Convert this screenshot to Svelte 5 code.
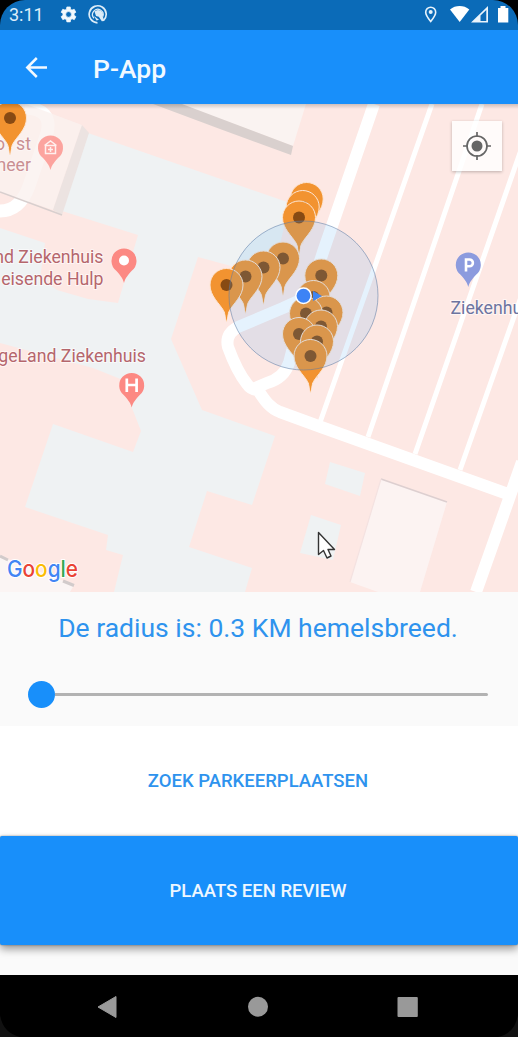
<script>
  const markers = [
    [10, 118], [306.7, 199], [302.7, 207], [299, 217.5],
    [283, 258.5], [263.5, 267.5], [245.5, 276.5], [226.5, 285],
    [321.3, 275.5], [313.5, 297], [326.5, 312.5], [306, 313.5],
    [321, 326.5], [299, 334], [317, 341.5], [310.5, 356]
  ];
</script>

<div class="phone">
  <header>
    <div class="status">
      <span class="clock">3:11</span>
      <svg class="left-icons" width="50" height="22" viewBox="58 4 50 22">
        <path fill="#f3f9fd" stroke="#f3f9fd" stroke-width=".8" fill-rule="evenodd" transform="translate(57.400 4.100) scale(.86)" d="M19.4 13c.1-.7.1-1.3 0-2l2.1-1.6-2-3.5-2.5 1a7 7 0 0 0-1.7-1L15 3.300h-4l-.5 2.600a7 7 0 0 0-1.700 1l-2.500-1-2 3.500L6.500 11a8 8 0 0 0 0 2l-2.200 1.600 2 3.500 2.500-1a7 7 0 0 0 1.700 1l.5 2.600h4l.4-2.600a7 7 0 0 0 1.700-1l2.500 1 2-3.500zM13 15.300a3.300 3.300 0 1 1 0-6.600 3.300 3.300 0 0 1 0 6.600z" />
        <path d="M103.500 20.500A8.500 8.500 0 1 0 97.500 22.800" fill="none" stroke="#dcecf8" stroke-width="1.700" />
        <path d="M94 18.300A5.300 5.300 0 1 1 102.800 16.500" fill="none" stroke="#dcecf8" stroke-width="1.300" />
        <path d="M94.500 11.500a5 5 0 0 1 8.300 5l1.500 4.500-2.500.3-3-4.500-2.800-.8zM94 16l5 3.700-2.500.9z" fill="#dcecf8" />
      </svg>
      <svg class="right-icons" width="90" height="22" viewBox="422 4 90 22">
        <path d="M430.700 21.500c-3-3.700-5-6.400-5-9.300a5 5 0 0 1 10 0c0 2.900-2 5.600-5 9.300z" fill="none" stroke="#e6f2fb" stroke-width="1.600" />
        <circle cx="430.700" cy="12" r="2" fill="#e6f2fb" />
        <path d="M450 9.500c5.500-4.600 13.800-4.600 19.300 0L459.700 22z" fill="#fff" />
        <path d="M471 22.500 488 6v16.500zM480.500 15.500v5.400h5.800v-10.800z" fill="#eaf4fc" fill-rule="evenodd" />
        <path d="M498 8h2.500V6h5v2h2.800v14.600H498z" fill="#fff" />
      </svg>
    </div>
    <div class="appbar">
      <svg width="24" height="24" viewBox="0 0 24 24"><path d="M23 12.500H3.500M12.800 3 3.300 12.500l9.500 9.500" fill="none" stroke="#f2f9ff" stroke-width="2.500" /></svg>
      <h1>P-App</h1>
    </div>
  </header>

  <main>
    <svg class="map" width="518" height="488" viewBox="0 104 518 488">
      <defs>
        <path id="pin" d="M0 37C-.8 34-.9 29-3 25.500C-7 18.500-16.500 11-16.500 0A16.500 16.500 0 0 1 16.500 0C16.500 11 7 18.500 3 25.500C.9 29 .8 34 0 37z" />
        <path id="poi" d="M0 22.500C-1.500 17-4 14.500-8 10A12.500 12.500 0 1 1 8 10C4 14.500 1.500 17 0 22.500z" />
        <linearGradient id="shade" x1="0" y1="0" x2="0" y2="1">
          <stop offset="0" stop-color="#000" stop-opacity=".18" /><stop offset="1" stop-color="#000" stop-opacity="0" />
        </linearGradient>
      </defs>
      <rect y="104" width="518" height="488" fill="#fde8e4" />
      <path fill="#eff2f3" d="M88 133 290 203 272 277 198 257 171 339 202 410 275 436 252 505 207 491 189 547 252 568 245 592H114L123 555 106 550 108 535 25 507 53 424 133 452 141 431 132 408 123 380 93 368 0 343V228L45 243 40 278 57 290 88 299 118 303 138 235 62 211z" />
      <path fill="#eff2f3" d="M330 462 365 473 360 496 325 484zM311 515 341 525 333 560 300 553z" />
      <path d="M25 108Q53 109 47 133L29 186Q20 211 0 211" fill="none" stroke="#fff" stroke-width="13" />
      <path d="M0 104H26L82 125 53 210 0 192z" fill="#faf1ef" opacity=".8" />
      <path d="M82 125 89 133 62 215 53 210z" fill="#ece3e1" />
      <path d="M0 192 62 215" stroke="#d8cfce" stroke-width="1.500" />
      <path d="M180 104H306L293 146z" fill="#faf3f1" />
      <path d="M153 104H182L293 146 291 155 220 129z" fill="#d9d0ce" />
      <path d="M381 479 447 502 420 592H378L350 582z" fill="#fcf3f2" />
      <path d="M381 479 447 502" stroke="#ddcfd0" stroke-width="1.600" />
      <path d="M381 479 350 582" stroke="#f4e2e1" stroke-width="1.200" />
      <path d="M0 556 74 585 70 592H0z" fill="#fbf5f4" />
      <path d="M0 556 8 560M63 581 74 585.500" stroke="#d2cbcb" stroke-width="3" />
      <g fill="none" stroke="#fff">
        <path stroke-width="5" d="M432 104 320.500 421M482 104 368 437M537 104 415 454M551 212 460 470" />
        <path stroke-width="12" stroke-linejoin="round" d="M374 104 323 252 297 332 289 363Q284 378 267 383L253 389M305 298 283 308 238 327Q225 334 228 347C232 358 239 374 247 384Q251 390 258 390C265 401 270 408 280 412L321 427 505 493M476 592 522 462" />
      </g>

      <g class="label warm">
        <text x="5" y="150" text-anchor="end" opacity=".7">o</text>
        <text x="31" y="150" text-anchor="end" opacity=".7">st</text>
        <text x="31" y="171" text-anchor="end" opacity=".7">neer</text>
        <text x="103.500" y="263" text-anchor="end">nd Ziekenhuis</text>
        <text x="103.500" y="285" text-anchor="end">eisende Hulp</text>
        <text x="146" y="361.500" text-anchor="end">geLand Ziekenhuis</text>
      </g>
      <g class="label cool"><text x="450.500" y="314">Ziekenhuis</text></g>

      <g fill="#fc8983">
        <use href="#poi" x="50.500" y="147.500" opacity=".75" />
        <use href="#poi" x="124" y="260.500" />
        <use href="#poi" x="131.700" y="385" />
      </g>
      <use href="#poi" x="468.300" y="264.500" fill="#8c9bde" />
      <circle cx="124" cy="260.500" r="5" fill="#fff" />
      <path d="M44.500 145.500 50.500 141 56.500 145.500M45.500 145.500V153.500H55.500V145.500zM48 149.500h5M50.500 147v5" fill="none" stroke="#fff0ee" stroke-width="1.500" />
      <path d="M126.800 378.500V392M136.600 378.500V392M126.800 385H136.600" stroke="#fff" stroke-width="2.700" />
      <path d="M466 271.500V259.500h3.500a3.200 3.200 0 0 1 0 6.800H466" fill="none" stroke="#fff" stroke-width="2.600" />

      {#each markers as [x, y]}
        <g transform="translate({x} {y})">
          <use href="#pin" fill="#f29330" stroke="#fde6d4" stroke-width="1" />
          <path d="M-1.200 28H1.200L0 36.500z" fill="#f29330" />
          <circle r="6" fill="#874a13" />
        </g>
      {/each}
      <path d="M313 291 322 296 313 301z" fill="#3b7ff0" />
      <circle cx="303.500" cy="295.500" r="74.500" fill="#50a8f0" fill-opacity=".15" stroke="#5d7ba6" stroke-opacity=".55" stroke-width="1" />
      <circle cx="303.500" cy="295.800" r="7.700" fill="#3d83f5" stroke="#fff" stroke-width="1.500" />

      <text class="google" x="7" y="577" textLength="71" lengthAdjust="spacingAndGlyphs"><tspan fill="#4285f4">G</tspan><tspan fill="#ea4335">o</tspan><tspan fill="#fbbc05">o</tspan><tspan fill="#4285f4">g</tspan><tspan fill="#34a853">l</tspan><tspan fill="#ea4335">e</tspan></text>
      <path d="M318.500 532.500V554.500L323.500 550.500 327 558 331 556 328 549.500H334.500z" fill="#fff" stroke="#333" stroke-width="1.400" stroke-linejoin="round" />
      <rect y="104" width="518" height="5" fill="url(#shade)" />
    </svg>
    <button class="locate" aria-label="Locatie">
      <svg width="30" height="30" viewBox="-15 -15 30 30">
        <circle r="10" fill="none" stroke="#666" stroke-width="1.700" />
        <circle r="5.500" fill="#666" />
        <path d="M0-14V-9M0 9V14M-14 0H-9M9 0H14" stroke="#666" stroke-width="1.700" />
      </svg>
    </button>
  </main>

  <section class="radius">
    <p>De radius is: 0.3 KM hemelsbreed.</p>
    <div class="slider"><span class="thumb"></span><span class="track"></span></div>
  </section>
  <button class="search">ZOEK PARKEERPLAATSEN</button>
  <button class="review">PLAATS EEN REVIEW</button>
  <div class="space"></div>
  <nav>
    <svg width="518" height="62" viewBox="0 975 518 62">
      <path d="M0 1015Q3 1033 20 1037H0zM518 1015Q515 1033 498 1037H518z" fill="#111" />
      <path d="M98 1007 116 996.500V1017.500z" fill="#999" stroke="#999" stroke-width="1" stroke-linejoin="round" />
      <circle cx="258" cy="1006.700" r="10" fill="#999" />
      <rect x="397.500" y="997" width="20.300" height="20" rx="1" fill="#999" />
    </svg>
  </nav>
</div>

<style>
  :global(body) { background: #000; }
  .phone { width: 518px; height: 1037px; display: flex; flex-direction: column; background: #fafafa; font-family: Roboto, sans-serif; overflow: hidden; }
  header { background: #000; flex: none; }
  .status { height: 30px; box-sizing: border-box; background: #0b6bb8; border-radius: 25px 25px 0 0; display: flex; align-items: center; padding: 0 6px 0 9px; }
  .clock { color: #dcedfa; font-size: 18px; width: 49px; line-height: 30px; }
  .right-icons { margin-left: auto; }
  .appbar { height: 74px; background: #188ffa; display: flex; align-items: center; padding-left: 24px; gap: 45px; }
  h1 { margin: 2px 0 0; font-size: 26.500px; font-weight: 500; color: #f2f9ff; }
  main { position: relative; height: 488px; flex: none; }
  .map { display: block; }
  .label { font-size: 17.700px; stroke: #fff; stroke-opacity: .6; stroke-width: 2px; paint-order: stroke; }
  .warm { fill: #b5666c; }
  .cool { fill: #6d74a0; }
  .google { font: 500 23px Inter, sans-serif; stroke: #fff; stroke-width: 2px; paint-order: stroke; }
  button { border: 0; padding: 0 2px 0 0; font: 500 18.500px Roboto, sans-serif; flex: none; }
  .locate { position: absolute; top: 17px; right: 16px; width: 50px; height: 50px; padding: 0; background: rgba(255,255,255,.8); box-shadow: 0 1px 3px rgba(0,0,0,.25); display: flex; align-items: center; justify-content: center; }
  .radius { height: 134px; flex: none; box-sizing: border-box; padding: 20px 30px 0 28px; }
  p { margin: 0; text-align: center; font-size: 26.500px; line-height: 32px; color: #2e93ee; white-space: nowrap; }
  .slider { display: flex; align-items: center; height: 28px; margin-top: 36px; }
  .thumb { width: 27px; height: 27px; border-radius: 50%; background: #188ffa; }
  .track { flex: 1; height: 3px; background: #b2b2b2; border-radius: 0 2px 2px 0; }
  .search { height: 110px; background: #fff; color: #2e93ee; }
  .review { height: 109px; background: #188ffa; color: #eef7ff; border-radius: 2px; box-shadow: 0 4px 9px rgba(0,0,0,.4), 0 0 2px rgba(0,0,0,.4); z-index: 1; }
  .space { flex: 1; }
  nav { height: 62px; background: #000; flex: none; }
  nav svg { display: block; }
</style>
